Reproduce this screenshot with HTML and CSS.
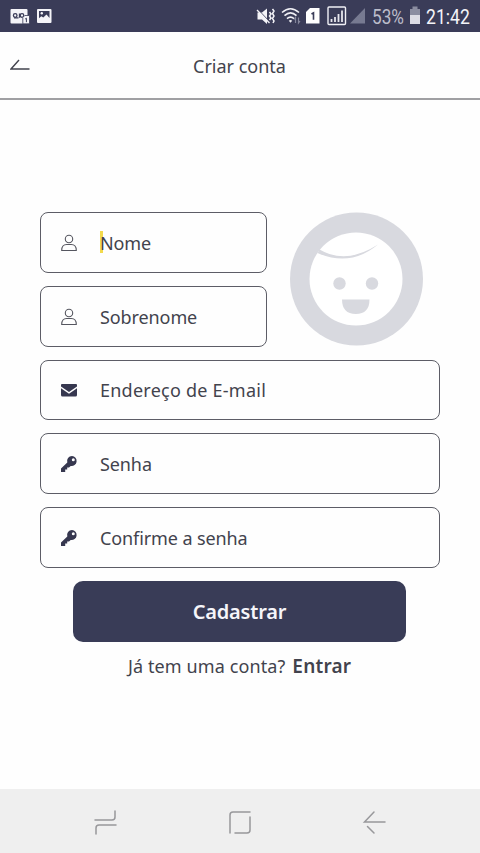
FILE: index.html
```html
<!DOCTYPE html>
<html lang="pt-BR">
<head>
    <meta charset="UTF-8">
    <title>Criar conta</title>
    <link rel="stylesheet" href="styles.css">
</head>
<body>
    <div class="status">
        <svg class="status-left" width="60" height="32" viewBox="0 0 60 32">
            <path fill="#f4f4f8" d="M11.500 9h15q1 0 1 1v13.500h-16q-1 0-1-1V10q0-1 1-1z"/>
            <g fill="none" stroke="#3a3c58" stroke-width="1.300">
                <circle cx="15.200" cy="15.500" r="1.800"/>
                <circle cx="22" cy="15.500" r="1.800"/>
                <path d="M14 17.800h4.500M19.500 13.500v4.300"/>
            </g>
            <path fill="#f4f4f8" stroke="#3a3c58" stroke-width=".8" d="M22.800 17.500l2-2h4.700v8.300h-6.700z"/>
            <path fill="none" stroke="#3a3c58" d="M25.200 19l1.200-.8v4"/>
            <rect x="37" y="9" width="14.500" height="14" rx="1" fill="#f4f4f8"/>
            <path fill="#3a3c58" d="M39 11h10.500v7l-3-3.500-3.200 3-2-1.300-2.300 2z"/>
            <circle cx="41.800" cy="13.300" r="1.200" fill="#f4f4f8"/>
        </svg>
        <div class="status-right">
            <svg width="112" height="32" viewBox="0 0 112 32">
                <path fill="#f4f4f8" d="M2.500 12.500H7l5-4V24l-5-4.500H2.500z"/>
                <path fill="none" stroke="#3a3c58" stroke-width="1" d="M3 9.500l12 12.500"/>
                <path fill="none" stroke="#f4f4f8" stroke-width="1.300" d="M2 10l12.500 13"/>
                <path fill="none" stroke="#f4f4f8" stroke-width="1.500" d="M14.500 12l1.500 2-1.500 2 1.500 2-1.500 2M17.500 9l1.500 2-1.500 2.500 1.500 2.500-1.500 2.500 1.500 2.500-1 2"/>
                <g fill="none" stroke="#f0f0f5" stroke-width="1.600">
                    <path d="M27 12.500q8.500-7.500 17 0M29.500 15.700q6-5.500 12 0M32 18.700q3.500-3 7 0"/>
                </g>
                <path fill="#f0f0f5" d="M33.800 20.800q1.700-1.500 3.400 0l-1.700 2z"/>
                <path fill="none" stroke="#85879c" stroke-width="1.200" d="M40.500 23v-5.500L39 19.500M43.500 17.500V23l1.500-2"/>
                <path fill="#fff" d="M55 8h9.500v15.500H51V12z"/>
                <path fill="none" stroke="#3a3c58" stroke-width="1.600" d="M56.500 14l2-1.200v7"/>
                <rect x="73" y="7" width="17.500" height="17.500" rx="1" fill="none" stroke="#f0f0f5" stroke-width="1.400"/>
                <path fill="none" stroke="#e6e6ed" stroke-width="1.800" d="M76.500 22v-3M80 22v-5M83.500 22v-8M87 22V10.500"/>
                <path fill="#777a91" d="M95 23.500l15-15.500v15.500z"/>
            </svg>
            <span class="percent">53%</span>
            <svg class="battery" width="12" height="32" viewBox="0 0 12 32">
                <path fill="#8b8da0" d="M3.500 6.500h5V9H11v7H1V9h2.500z"/>
                <path fill="#dcdce4" d="M1 15h10v9H1z"/>
            </svg>
            <span class="clock">21:42</span>
        </div>
    </div>

    <div class="header">
        <svg class="back" width="20" height="12" viewBox="0 0 20 12">
            <path d="M9 1L1 10h18.500"/>
        </svg>
        <span class="title">Criar conta</span>
    </div>

    <div class="content">
        <div class="top">
            <div class="names">
                <div class="field">
                    <svg class="icon line" viewBox="0 0 18 18">
                        <circle cx="9" cy="5" r="3.700"/>
                        <path d="M1.700 16.500q0-6 5-6h4.600q5 0 5 6z"/>
                    </svg>
                    <span class="label nome">Nome</span>
                </div>
                <div class="field">
                    <svg class="icon line" viewBox="0 0 18 18">
                        <circle cx="9" cy="5" r="3.700"/>
                        <path d="M1.700 16.500q0-6 5-6h4.600q5 0 5 6z"/>
                    </svg>
                    <span class="label sobrenome">Sobrenome</span>
                </div>
            </div>
            <svg class="avatar" width="134" height="134" viewBox="0 0 134 134">
                <circle cx="66.500" cy="67" r="66.500" fill="#d8d9df"/>
                <circle cx="66" cy="67" r="46.500" fill="#fff"/>
                <g fill="#d8d9df">
                    <path d="M29.500 37.500q27 15.500 58.500-5Q60.500 55.500 27.500 41z"/>
                    <circle cx="49.500" cy="71.500" r="6.200"/>
                    <circle cx="82" cy="71.500" r="6.200"/>
                    <path d="M52 87.500h27.500q0 14.500-13.700 14.500T52 87.500z"/>
                </g>
            </svg>
        </div>
        <div class="field">
            <svg class="icon" viewBox="0 0 18 18">
                <path d="M1.500 3h15l.5 1v1.500l-8 5.500-8-5.500V4zM1 7.200l8 5.500 8-5.500V14q0 1.500-1.500 1.500h-13Q1 15.500 1 14z"/>
            </svg>
            <span class="label email">Endereço de E-mail</span>
        </div>
        <div class="field">
            <svg class="icon" viewBox="0 0 18 18">
                <path fill-rule="evenodd" d="M12 1a5 5 0 1 1-1.300 9.900L9 12.500H7.200v2H5.200V17H1v-3.500l6.300-6A5 5 0 0 1 12 1zm1.300 2.300a1.500 1.500 0 1 0 0 3 1.500 1.500 0 0 0 0-3z"/>
            </svg>
            <span class="label senha">Senha</span>
        </div>
        <div class="field">
            <svg class="icon" viewBox="0 0 18 18">
                <path fill-rule="evenodd" d="M12 1a5 5 0 1 1-1.300 9.900L9 12.500H7.200v2H5.200V17H1v-3.500l6.300-6A5 5 0 0 1 12 1zm1.300 2.300a1.500 1.500 0 1 0 0 3 1.500 1.500 0 0 0 0-3z"/>
            </svg>
            <span class="label confirme">Confirme a senha</span>
        </div>
        <button class="cadastrar">Cadastrar</button>
        <div class="login">
            <span class="pergunta">Já tem uma conta?</span>
            <span class="entrar">Entrar</span>
        </div>
    </div>

    <div class="navbar">
        <svg width="24" height="26" viewBox="0 0 24 26">
            <path d="M1 11h17q3 0 3-3V2M22 16H5q-3 0-3 3v6"/>
        </svg>
        <svg width="24" height="26" viewBox="0 0 24 26">
            <path d="M2 24V6q0-3 3-3h17M22 8v13q0 3-3 3H7"/>
        </svg>
        <svg width="24" height="26" viewBox="0 0 24 26">
            <path d="M12 3L2.500 13H23M5.500 17.500l6.500 6.500"/>
        </svg>
    </div>
</body>
</html>
```

FILE: styles.css
```css
*{
    box-sizing: border-box;
}
body{
    margin: 0;
    height: 853px;
    display: flex;
    flex-direction: column;
    background-color: #fefefe;
    color: #42434d;
    font-family: "Noto Sans", sans-serif;
    font-size: 18px;
    overflow: hidden;
}
svg{
    display: block;
    flex: none;
}
.status{
    height: 32px;
    display: flex;
    justify-content: space-between;
    background-color: #3a3c58;
    font-family: Roboto, sans-serif;
    font-size: 20px;
    line-height: 34px;
}
.status-right{
    display: flex;
    width: 225px;
}
.percent{
    width: 37px;
    margin-left: 5px;
    color: #bcbdca;
    transform: scaleX(.86);
    transform-origin: left;
}
.clock{
    margin-left: 5px;
    color: #f4f4f8;
    transform: scaleX(.88);
    transform-origin: left;
}
.header{
    height: 68px;
    display: grid;
    grid-template-columns: 40px 1fr 40px;
    align-items: center;
    border-bottom: 2px solid #a0a0a3;
}
.back{
    margin-left: 10px;
    fill: none;
    stroke: #42434d;
    stroke-width: 1.4;
}
.title{
    text-align: center;
    line-height: 26px;
    padding-top: 2px;
    padding-right: 1px;
}
.content{
    flex: 1;
    padding: 112px 40px 0;
    display: flex;
    flex-direction: column;
    gap: 13px;
}
.top{
    display: flex;
    gap: 23px;
}
.names{
    width: 227px;
    display: flex;
    flex-direction: column;
    gap: 13px;
}
.field{
    height: 60.75px;
    display: flex;
    align-items: center;
    flex: none;
    padding-left: 19px;
    padding-top: 1px;
    border: 1px solid #5c5d66;
    border-radius: 8px;
}
.icon{
    width: 18px;
    height: 18px;
    margin-right: 22px;
    fill: #36374f;
}
.line{
    fill: none;
    stroke: #55565f;
    stroke-width: 1.1;
}
.label{
    white-space: nowrap;
    line-height: 26px;
}
.nome{
    background: linear-gradient(#f3da4c, #f3da4c) 0 1px / 3px 22px no-repeat;
}
.email{
    letter-spacing: .24px;
}
.nome, .sobrenome, .senha, .confirme{
    letter-spacing: -.1px;
}
.cadastrar{
    width: 333px;
    height: 60.75px;
    flex: none;
    margin-left: 33px;
    padding: 1px 0 0;
    border: none;
    border-radius: 10px;
    background-color: #393c57;
    color: #f5f5fa;
    font-family: inherit;
    font-size: 20px;
    font-weight: 600;
    letter-spacing: -.2px;
}
.login{
    display: flex;
    gap: 7px;
    margin-left: 88px;
    line-height: 26px;
    margin-top: -2px;
    white-space: nowrap;
}
.pergunta{
    letter-spacing: .1px;
}
.entrar{
    font-weight: 600;
    font-size: 19px;
    letter-spacing: .2px;
}
.navbar{
    height: 64px;
    display: flex;
    justify-content: space-between;
    align-items: center;
    padding: 1px 94px 0;
    background-color: #efefef;
}
.navbar svg{
    fill: none;
    stroke: #98989b;
    stroke-width: 1.5;
    stroke-linecap: round;
}
```
